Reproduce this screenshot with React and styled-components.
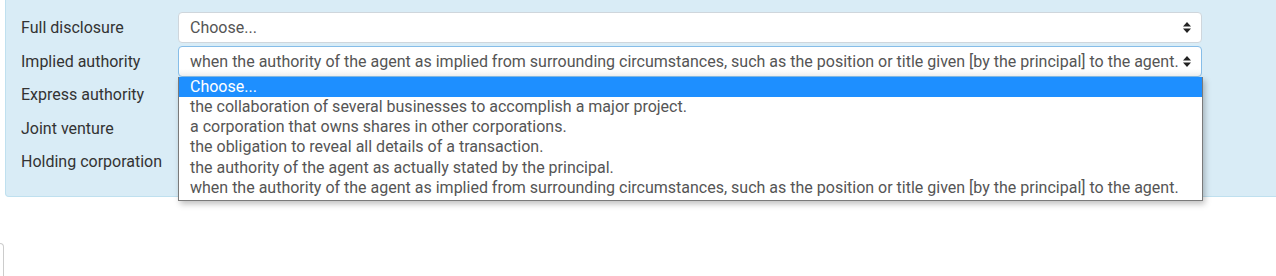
import React from "react";
import styled, { createGlobalStyle } from "styled-components";

const GlobalStyle = createGlobalStyle`
  html, body {
    margin: 0;
    padding: 0;
    background: #ffffff;
    overflow: hidden;
  }
  body {
    font-family: Roboto, "Liberation Sans", Arial, sans-serif;
    font-size: 16px;
    color: #333333;
  }
`;

const options = [
  "the collaboration of several businesses to accomplish a major project.",
  "a corporation that owns shares in other corporations.",
  "the obligation to reveal all details of a transaction.",
  "the authority of the agent as actually stated by the principal.",
  "when the authority of the agent as implied from surrounding circumstances, such as the position or title given [by the principal] to the agent.",
];

const rows = [
  { label: "Full disclosure", value: "Choose..." },
  { label: "Implied authority", value: options[4], open: true },
  { label: "Express authority" },
  { label: "Joint venture" },
  { label: "Holding corporation" },
];

const Panel = styled.div`
  margin: -1px -30px 0 5px;
  padding: 13px 0 19px 15px;
  background: #d9ecf6;
  border: 1px solid #bfe0ef;
  border-top: none;
  border-radius: 0 0 0 4px;
`;

const Form = styled.div`
  display: grid;
  grid-template-columns: 157px 1024px;
  grid-auto-rows: 31px;
  row-gap: 2.5px;
  align-items: center;
`;

const Label = styled.div`
  color: #333333;
  line-height: 31px;
  white-space: nowrap;
`;

const Field = styled.div`
  position: relative;
  height: 31px;
`;

const SelectBox = styled.div`
  box-sizing: border-box;
  height: 31px;
  display: flex;
  align-items: center;
  justify-content: space-between;
  padding: 0 10px 0 11px;
  background: ${(p) =>
    p.$focused ? "linear-gradient(#ffffff 75%, #f1f1f1)" : "#ffffff"};
  border: 1px solid ${(p) => (p.$focused ? "#86bde8" : "#cfd6dc")};
  border-radius: 4px;
  color: #555555;
  white-space: nowrap;
`;

const Arrows = () => (
  <svg width="8" height="11" viewBox="0 0 8 11">
    <path d="M4 0 L8 4.5 L0 4.5 Z" fill="#222" />
    <path d="M4 11 L8 6.5 L0 6.5 Z" fill="#222" />
  </svg>
);

const Dropdown = styled.div`
  position: absolute;
  top: 31px;
  left: 0;
  width: 1025px;
  box-sizing: border-box;
  padding-bottom: 2px;
  background: #ffffff;
  border: 1px solid #7a7a7a;
  border-top: none;
  box-shadow: 2px 3px 6px rgba(0, 0, 0, 0.25);
  z-index: 10;
`;

const Option = styled.div`
  height: 20.3px;
  line-height: 20.5px;
  padding: 0 11px;
  white-space: nowrap;
  color: ${(p) => (p.$active ? "#ffffff" : "#555555")};
  background: ${(p) => (p.$active ? "#1e8fff" : "transparent")};
`;

const Stub = styled.div`
  width: 3px;
  height: 40px;
  margin-top: 46px;
  border: 1px solid #cccccc;
  border-left: none;
  border-radius: 0 4px 0 0;
`;

export default function App() {
  return (
    <>
      <GlobalStyle />
      <Panel>
        <Form>
          {rows.map((r) => (
            <React.Fragment key={r.label}>
              <Label>{r.label}</Label>
              {r.value ? (
                <Field>
                  <SelectBox $focused={r.open}>
                    <span>{r.value}</span>
                    <Arrows />
                  </SelectBox>
                  {r.open && (
                    <Dropdown>
                      <Option $active>Choose...</Option>
                      {options.map((o) => (
                        <Option key={o}>{o}</Option>
                      ))}
                    </Dropdown>
                  )}
                </Field>
              ) : (
                <div />
              )}
            </React.Fragment>
          ))}
        </Form>
      </Panel>
      <Stub />
    </>
  );
}
